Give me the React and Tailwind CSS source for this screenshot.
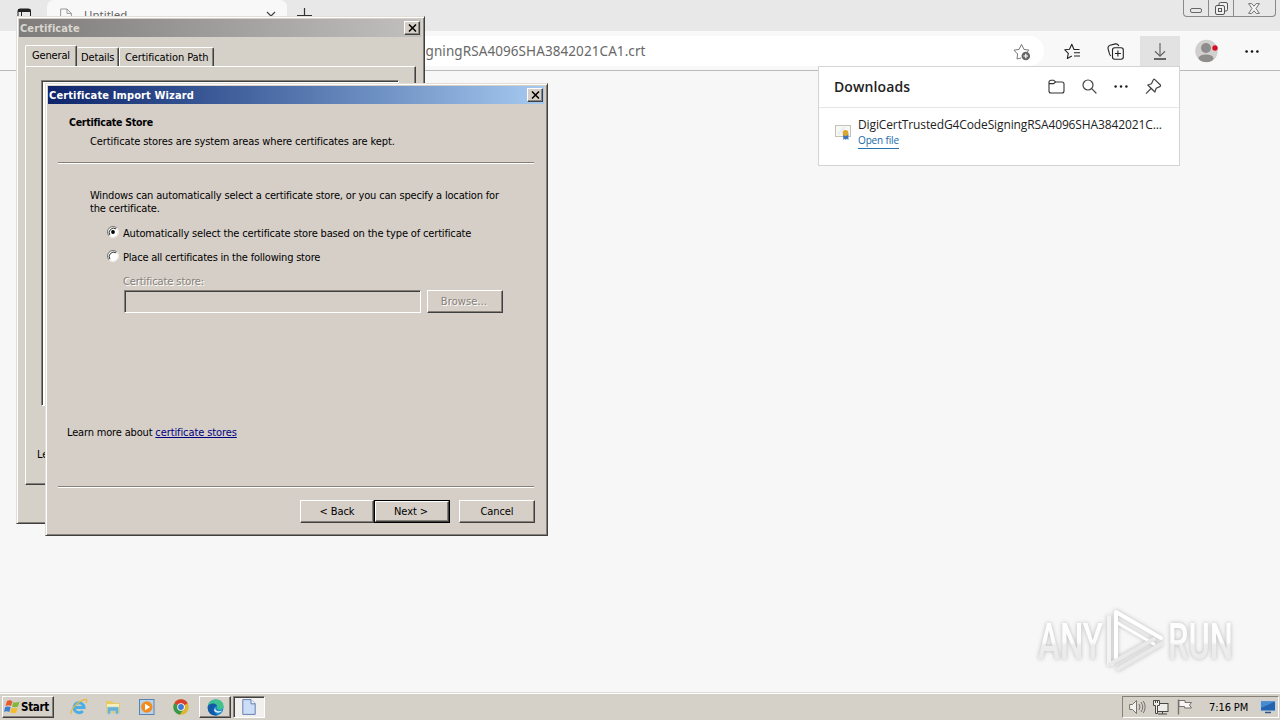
import React from "react";

const UI = "font-['DejaVu_Sans_Condensed','DejaVu_Sans',sans-serif]";

function CloseBox() {
  return (
    <button className="flex h-[14px] w-[16px] items-center justify-center border border-t-white border-l-white border-r-[#404040] border-b-[#404040] bg-[#d5cfc7] shadow-[inset_-1px_-1px_0_#8a8680]">
      <svg width="9" height="8" viewBox="0 0 9 8" className="block">
        <path d="M1 0.5 L8 7.5 M8 0.5 L1 7.5" stroke="#000" strokeWidth="1.5" fill="none" />
      </svg>
    </button>
  );
}

function Button({ children, className = "", disabled = false }) {
  return (
    <button
      className={
        "flex h-[23px] items-center justify-center border border-t-white border-l-white border-r-[#404040] border-b-[#404040] bg-[#d5cfc8] text-[11px] leading-[13px] tracking-[-0.1px] shadow-[inset_-1px_-1px_0_#858078] " +
        (disabled ? "text-[#858078] [text-shadow:1px_1px_0_#fff] " : "text-black ") +
        className
      }
    >
      {children}
    </button>
  );
}

function Rule() {
  return <div className="h-[2px] w-[476px] border-t border-b border-t-[#858078] border-b-white" />;
}

function Radio({ checked }) {
  return (
    <svg width="12" height="12" viewBox="0 0 12 12" className="block shrink-0">
      <circle cx="6" cy="6" r="5" fill="#fff" />
      <path d="M2.1 9.9 A5.5 5.5 0 0 1 9.9 2.1" fill="none" stroke="#777" strokeWidth="1" />
      <path d="M2.9 9 A4.4 4.4 0 0 1 9 2.9" fill="none" stroke="#333" strokeWidth="1" />
      <path d="M2.1 9.9 A5.5 5.5 0 0 0 9.9 2.1" fill="none" stroke="#f4f2ee" strokeWidth="1" />
      {checked && <circle cx="6" cy="6" r="1.9" fill="#000" />}
    </svg>
  );
}

function FolderIcon() {
  return (
    <svg width="17" height="15" viewBox="0 0 17 15" fill="none" stroke="#333" strokeWidth="1.1">
      <path d="M1 3.2 A2 2 0 0 1 3 1.2 H5.6 L7.6 3 H14 A2 2 0 0 1 16 5 V12 A2 2 0 0 1 14 14 H3 A2 2 0 0 1 1 12 Z M1 4.6 H5.6 L7.6 3" />
    </svg>
  );
}

function SearchIcon() {
  return (
    <svg width="15" height="15" viewBox="0 0 15 15" fill="none" stroke="#444" strokeWidth="1.2" strokeLinecap="round">
      <circle cx="6" cy="6" r="5" />
      <path d="M9.7 9.7 L14 14" />
    </svg>
  );
}

function Dots() {
  return (
    <svg width="14" height="3" viewBox="0 0 14 3" fill="#222">
      <circle cx="1.6" cy="1.5" r="1.25" />
      <circle cx="7" cy="1.5" r="1.25" />
      <circle cx="12.4" cy="1.5" r="1.25" />
    </svg>
  );
}

function PinIcon() {
  return (
    <svg width="17" height="17" viewBox="0 0 17 17" fill="none" stroke="#444" strokeWidth="1.2" strokeLinejoin="round">
      <path d="M9.6 1.4 L15.4 7 C15.8 7.6 15.5 8.3 14.8 8.6 L11.2 10.3 L9.9 14 L2.8 7 L6.5 5.8 L8.2 2 C8.5 1.2 9 1 9.6 1.4 Z M6 10.5 L1 15.6" />
    </svg>
  );
}

function TabStrip() {
  return (
    <div className="flex h-[31px] bg-[#e8e8e8]">
      <div className="w-[47px] pt-[8px] pl-[17px]">
        <svg width="15" height="14" viewBox="0 0 15 14" fill="none" stroke="#222">
          <rect x="1" y="1" width="12.5" height="12" rx="2" />
          <path d="M1 2.5 H13.5" strokeWidth="3" />
          <path d="M4.5 3 V13" />
        </svg>
      </div>
      <div className="flex h-[31px] w-[240px] items-start rounded-t-[7px] bg-[#f8f8f8] pt-[8px] pl-[13px]">
        <svg width="12" height="15" viewBox="0 0 12 15" fill="none" stroke="#999">
          <path d="M.6 1 H7 L11.4 5.4 V14 H.6 Z M7 1 V5.4 H11.4" />
        </svg>
        <span className="-mt-px ml-[12px] font-['Noto_Sans',sans-serif] text-[11.5px] leading-[15px] text-[#666]">Untitled</span>
        <svg width="10" height="10" viewBox="0 0 10 10" className="mt-[3px] mr-[11px] ml-auto shrink-0" stroke="#444" strokeWidth="1.2">
          <path d="M1 1 L9 9 M9 1 L1 9" />
        </svg>
      </div>
      <svg width="15" height="15" viewBox="0 0 15 15" className="mt-[8px] ml-[10px]" stroke="#333" strokeWidth="1.2">
        <path d="M7.5 0 V15 M0 7.5 H15" />
      </svg>
      <div className="ml-auto flex h-[17px] w-[93px] rounded-b-[4px] border border-t-0 border-[#8a8a8a]">
        <div className="flex w-[25px] items-end justify-center border-r border-[#8a8a8a] pb-[3px]">
          <svg width="12" height="5" viewBox="0 0 12 5" fill="none" stroke="#666">
            <rect x=".5" y=".5" width="11" height="4" rx="1.5" />
          </svg>
        </div>
        <div className="flex w-[25px] items-center justify-center border-r border-[#8a8a8a]">
          <svg width="13" height="13" viewBox="0 0 13 13" fill="#eee" stroke="#555">
            <rect x="4" y=".5" width="8.5" height="8.5" rx="1.5" />
            <rect x=".5" y="3.5" width="9" height="9" rx="1.5" />
            <rect x="3.5" y="6.5" width="3" height="3" />
          </svg>
        </div>
        <div className="flex flex-1 items-center justify-center pr-px">
          <svg width="12" height="11" viewBox="0 0 12 11" fill="#f4f4f4" stroke="#666" strokeWidth=".9">
            <path d="M.6 .6 H3.8 L6 3.2 L8.2 .6 H11.4 L8 5.5 L11.4 10.4 H8.2 L6 7.8 L3.8 10.4 H.6 L4 5.5 Z" />
          </svg>
        </div>
      </div>
      <div className="w-[4px]" />
    </div>
  );
}

function Toolbar() {
  return (
    <div className="flex h-[40px] items-start border-b border-[#b9b9b9] bg-[#f8f8f8] pt-[5px]">
      <div className="ml-[120px] flex h-[30px] w-[924px] items-center rounded-full bg-white pr-[13px]">
        <span className="ml-[302px] font-['Noto_Sans',sans-serif] text-[13.5px] leading-[18px] tracking-[0.08px] whitespace-nowrap text-[#686868]">
          igningRSA4096SHA3842021CA1.crt
        </span>
        <svg width="18" height="18" viewBox="0 0 18 18" className="mt-[2px] ml-auto" fill="none" stroke="#777" strokeLinejoin="round">
          <path d="M8 15 L4 16 L4.6 11 L1 7.2 L6 6.4 L8.5 1.4 L11 6.4 L16 7.2 L13.8 9.4" />
          <circle cx="12.8" cy="13" r="4.3" fill="#666" stroke="none" />
          <path d="M12.8 10.7 V15.3 M10.5 13 H15.1" stroke="#fff" strokeWidth="1.2" />
        </svg>
      </div>
      <svg width="17" height="17" viewBox="0 0 17 17" className="mt-[7px] ml-[20px]" fill="none" stroke="#222" strokeWidth="1.1" strokeLinejoin="round">
        <path d="M15.5 6.5 H10 L7.8 1.2 L5.5 6.2 L.8 6.8 L4.3 10.3 L3.3 15.5 L7.8 13" />
        <path d="M10 9.7 H16 M10 13 H16" />
      </svg>
      <svg width="17" height="17" viewBox="0 0 17 17" className="mt-[7px] ml-[26px]" fill="none" stroke="#222" strokeWidth="1.1">
        <path d="M4 13 C2 12 2.5 10 1.2 6.2 C.6 4 1 3 3 2.3 L8.5 .9 C10.5 .5 11.3 1.5 11.8 3.2" />
        <rect x="5.5" y="4.8" width="10.8" height="11.4" rx="2.2" />
        <path d="M10.9 7.5 V13.5 M7.9 10.5 H13.9" />
      </svg>
      <div className="ml-[16px] flex h-[30px] w-[40px] items-center justify-center bg-[#e2e2e2]">
        <svg width="14" height="17" viewBox="0 0 14 17" fill="none" stroke="#333" strokeWidth="1.2">
          <path d="M7 0 V13 M2 8.3 L7 13.2 L12 8.3" stroke="#666" />
          <path d="M1 16 H13" stroke="#111" />
        </svg>
      </div>
      <svg width="24" height="24" viewBox="0 0 24 24" className="mt-[3px] ml-[15px]">
        <defs>
          <clipPath id="avatar">
            <circle cx="11.5" cy="12" r="11.3" />
          </clipPath>
        </defs>
        <circle cx="11.5" cy="12" r="11.3" fill="#d2d0ce" />
        <g clipPath="url(#avatar)" fill="#8f8d8b">
          <circle cx="11" cy="9" r="5" />
          <ellipse cx="11" cy="19.4" rx="7.5" ry="4" />
        </g>
        <circle cx="20" cy="9" r="2.7" fill="#d80f24" />
      </svg>
      <svg width="14" height="3" viewBox="0 0 14 3" fill="#111" className="mt-[14px] ml-[26px]">
        <circle cx="1.6" cy="1.5" r="1.3" />
        <circle cx="7" cy="1.5" r="1.3" />
        <circle cx="12.4" cy="1.5" r="1.3" />
      </svg>
    </div>
  );
}

function Downloads() {
  return (
    <div className="absolute top-[66px] left-[818px] h-[100px] w-[362px] border border-[#d4d4d4] bg-white">
      <div className="flex h-[41px] items-center border-b border-[#e6e6e6] pr-[17px] pl-[15px]">
        <span className="font-['Open_Sans',sans-serif] text-[14px] leading-[18px] font-semibold tracking-[0.1px] text-[#222]">Downloads</span>
        <div className="ml-auto flex items-center">
          <div className="mb-[2px]"><FolderIcon /></div>
          <div className="mb-[2px] ml-[17px]"><SearchIcon /></div>
          <div className="mb-[2px] ml-[17px]"><Dots /></div>
          <div className="mb-[2px] ml-[17px]"><PinIcon /></div>
        </div>
      </div>
      <div className="flex pt-[9px] pl-[16px]">
        <svg width="17" height="17" viewBox="0 0 17 17" className="mt-[7px]">
          <rect x=".5" y="1.5" width="15" height="11" fill="#f7f8f2" stroke="#c4c2ba" />
          <path d="M2 10 L8 3 L11 3 L4 11 Z" fill="#e4edfb" />
          <path d="M8 10 H11 V16 L9.7 14.8 L8.4 16 Z" fill="#3f73b8" />
          <path d="M11 10 H13.4 V16 L12 14.8 L11 15.6 Z" fill="#3f73b8" />
          <circle cx="10.5" cy="9" r="2.9" fill="#dba52e" />
        </svg>
        <div className="ml-[6px] flex flex-col items-start font-['Open_Sans',sans-serif]">
          <span className="text-[12px] leading-[16px] tracking-[-0.12px] whitespace-nowrap text-[#222]">
            DigiCertTrustedG4CodeSigningRSA4096SHA3842021C...
          </span>
          <span className="border-b border-[#2a72ad] text-[10px] leading-[15px] tracking-[-0.15px] whitespace-nowrap text-[#1768aa]">Open file</span>
        </div>
      </div>
    </div>
  );
}

function CertificateWindow() {
  return (
    <div className="absolute top-[16px] left-[16px] h-[508px] w-[409px] border border-t-[#e2ded8] border-l-[#e2ded8] border-r-[#404040] border-b-[#404040] bg-[#d5d1c9] shadow-[inset_1px_1px_0_#fff,inset_-1px_-1px_0_#858078]">
      <div className="mt-[2px] ml-[2px] flex h-[18px] w-[402px] items-center justify-between bg-gradient-to-r from-[#7f7d7b] to-[#c1c0be] pr-[1px] pl-[1px]">
        <span className="text-[11px] leading-[13px] font-bold tracking-[0.1px] text-[#d9d6d0]">Certificate</span>
        <CloseBox />
      </div>
      <div className="flex h-[29px] items-end pl-[8px] text-[11px] leading-[13px]">
        <div className="z-10 h-[21px] w-[52px] rounded-t-[2px] border border-b-0 border-t-white border-r-[#404040] border-l-white bg-[#d5d1c9] pt-[3px] pl-[6px] tracking-[-0.15px] whitespace-nowrap shadow-[inset_-1px_0_0_#858078]">General</div>
        <div className="h-[19px] w-[42px] rounded-t-[2px] border-t border-r border-t-white border-r-[#404040] pt-[3px] pl-[4px] tracking-[-0.15px] whitespace-nowrap shadow-[inset_-1px_0_0_#858078]">Details</div>
        <div className="h-[19px] w-[95px] rounded-t-[2px] border border-b-0 border-t-white border-r-[#404040] border-l-white pt-[3px] pl-[5px] tracking-[-0.1px] whitespace-nowrap shadow-[inset_-1px_0_0_#858078]">Certification Path</div>
      </div>
      <div className="ml-[8px] h-[419px] w-[391px] border border-t-white border-r-[#404040] border-b-[#404040] border-l-white shadow-[inset_-1px_-1px_0_#858078]">
        <div className="mt-[13px] ml-[15px] h-[326px] w-[358px] border border-t-[#858078] border-r-white border-b-white border-l-[#858078] bg-white shadow-[inset_1px_1px_0_#404040]" />
        <div className="mt-[42px] ml-[11px] text-[11px] leading-[13px]">Learn more about</div>
      </div>
    </div>
  );
}

function Wizard() {
  return (
    <div className="absolute top-[83px] left-[45px] h-[453px] w-[503px] border border-t-[#e2ded8] border-l-[#e2ded8] border-r-[#404040] border-b-[#404040] bg-[#d6cfc8] text-[11px] leading-[13px] text-black shadow-[inset_1px_1px_0_#fff,inset_-1px_-1px_0_#858078]">
      <div className="mt-[2px] ml-[2px] flex h-[18px] w-[496px] items-center justify-between bg-gradient-to-r from-[#0f246b] to-[#a6caf0] pr-[1px] pl-[1px]">
        <span className="font-bold tracking-[0.13px] whitespace-nowrap text-white">Certificate Import Wizard</span>
        <CloseBox />
      </div>
      <div className="h-[58px] pt-[12px] pl-[23px]">
        <div className="text-[10.5px] font-bold tracking-[-0.25px] whitespace-nowrap">Certificate Store</div>
        <div className="mt-[6px] pl-[21px] tracking-[-0.11px] whitespace-nowrap">Certificate stores are system areas where certificates are kept.</div>
      </div>
      <div className="pl-[12px]"><Rule /></div>
      <div className="h-[322px] pl-[21px]">
        <div className="pt-[25px] pl-[23px]">
          <div className="tracking-[-0.17px] whitespace-nowrap">Windows can automatically select a certificate store, or you can specify a location for</div>
          <div className="tracking-[-0.17px] whitespace-nowrap">the certificate.</div>
        </div>
        <div className="mt-[12px] flex items-start pl-[40px]">
          <div className="-mt-px"><Radio checked /></div>
          <span className="ml-[4px] tracking-[-0.16px] whitespace-nowrap">Automatically select the certificate store based on the type of certificate</span>
        </div>
        <div className="mt-[11px] flex items-start pl-[40px]">
          <div className="-mt-px"><Radio /></div>
          <span className="ml-[4px] tracking-[-0.21px] whitespace-nowrap">Place all certificates in the following store</span>
        </div>
        <div className="mt-[11px] pl-[56px] tracking-[-0.1px] text-[#858078] [text-shadow:1px_1px_0_#fff]">Certificate store:</div>
        <div className="mt-[2px] flex pl-[57px]">
          <div className="h-[23px] w-[297px] border border-t-[#858078] border-r-white border-b-white border-l-[#858078] shadow-[inset_1px_1px_0_#404040]" />
          <Button disabled className="ml-[6px] w-[76px] pr-[2px] tracking-[0.1px]!">Browse...</Button>
        </div>
        <div className="mt-[113px] tracking-[-0.17px] whitespace-nowrap">
          Learn more about <span className="tracking-[-0.1px] text-[#000080] underline">certificate stores</span>
        </div>
      </div>
      <div className="pl-[12px]"><Rule /></div>
      <div className="mt-[12px] flex pl-[254px]">
        <Button className="w-[74px]">&lt; Back</Button>
        <div className="flex h-[23px] w-[76px] border border-black">
          <Button className="h-[21px]! w-[74px] pr-[2px]">Next &gt;</Button>
        </div>
        <Button className="ml-[9px] w-[76px]">Cancel</Button>
      </div>
    </div>
  );
}

function Watermark() {
  return (
    <svg width="216" height="76" viewBox="0 0 216 76" className="absolute top-[604px] left-[1034px] overflow-visible drop-shadow-[0_0_2px_rgba(0,0,0,0.25)]">
      <defs>
        <linearGradient id="wm" x1="0" y1="0" x2="0" y2="1">
          <stop offset="0" stopColor="#fff" />
          <stop offset="0.5" stopColor="#fcfcfc" />
          <stop offset="0.55" stopColor="#ededed" />
          <stop offset="1" stopColor="#e8e8e8" />
        </linearGradient>
      </defs>
      <g fill="url(#wm)" fontFamily="Roboto, sans-serif" fontSize="50" fontWeight="500">
        <text x="4" y="55" textLength="65" lengthAdjust="spacingAndGlyphs">ANY</text>
        <text x="134" y="55" textLength="65" lengthAdjust="spacingAndGlyphs">RUN</text>
      </g>
      <g fill="none" strokeWidth="4" strokeLinecap="round" strokeLinejoin="round">
        <path d="M75 13 V60 H78" stroke="#f3f3f3" />
        <path d="M82 54 V8 L127 34" stroke="#fff" />
        <path d="M82 18 L120 40" stroke="#fff" strokeWidth="3" />
        <path d="M76 60 L120 35 M84 65 L127 40" stroke="#e9e9e9" />
      </g>
    </svg>
  );
}

function Taskbar() {
  return (
    <div className="flex h-[28px] items-start border-t border-[#dedbd5] bg-[#d5d0c8] pt-[3px] shadow-[inset_0_1px_0_#fff]">
      <button className="ml-[2px] flex h-[22px] w-[52px] items-center border border-t-white border-l-white border-r-[#404040] border-b-[#404040] pl-px shadow-[inset_-1px_-1px_0_#858078]">
        <svg width="17" height="16" viewBox="0 0 17 16" className="shrink-0">
          <path d="M3 2 Q6 .5 8.5 2.5 L7 7 Q4.5 5.5 1.5 7 Z" fill="#e65a2d" />
          <path d="M9.5 3 Q12 4.3 15.5 2.5 L14 7.5 Q11 9 8 7.4 Z" fill="#7fb83b" />
          <path d="M1.2 8 Q4 6.7 6.7 8.2 L5.3 13 Q2.8 11.5 0 12.8 Z" fill="#3f7fd0" />
          <path d="M7.7 8.7 Q11 10 13.7 8.7 L12.3 13.4 Q9.5 15 6.3 13.4 Z" fill="#f3bd2a" />
        </svg>
        <span className="text-[11.5px] leading-[14px] font-bold tracking-[-0.3px] text-black">Start</span>
      </button>
      <div className="ml-[16px] flex h-[22px] items-center">
        <svg width="18" height="18" viewBox="0 0 18 18" fill="none">
          <path d="M4 9.5 H14 A5 5 0 1 0 12.8 13" stroke="#4baee5" strokeWidth="3" />
          <path d="M1.2 16 C-.5 12 9 2.5 15 1.5 C17.3 1.2 17 3.2 16 5" stroke="#e6ba42" strokeWidth="1.3" />
        </svg>
        <svg width="18" height="18" viewBox="0 0 18 18" className="ml-[16px]">
          <path d="M2 3 H8 L9.5 5 H16 V15 H2 Z" fill="#e7ca68" />
          <path d="M3 6 H15 V9 H3 Z" fill="#f9efbb" />
          <path d="M3.5 9 H14.5 V16 H11.5 V13 H6.5 V16 H3.5 Z" fill="#66afd5" stroke="#a4d4ea" strokeWidth=".7" />
        </svg>
        <svg width="18" height="18" viewBox="0 0 18 18" className="ml-[16px]">
          <rect x="1.5" y="1.5" width="14.5" height="15" fill="#b9d2ea" stroke="#5684b6" />
          <circle cx="8.8" cy="9" r="5.7" fill="#f28b1d" />
          <path d="M7 5.7 L12.2 9 L7 12.3 Z" fill="#fff" />
        </svg>
        <svg width="18" height="18" viewBox="0 0 18 18" className="ml-[16px]">
          <circle cx="9" cy="9" r="7.7" fill="#ddb62f" />
          <path d="M9 9 L2.3 5.2 A7.7 7.7 0 0 1 15.7 5.2 Z" fill="#d7402f" />
          <path d="M9 9 L2.3 5.2 A7.7 7.7 0 0 0 8 16.6 L11.5 11 Z" fill="#36994a" />
          <circle cx="9" cy="9" r="3.8" fill="#fff" />
          <circle cx="9" cy="9" r="2.9" fill="#4078d4" />
        </svg>
      </div>
      <div className="ml-[9px] flex h-[22px] w-[32px] items-center justify-center border border-t-white border-l-white border-r-[#404040] border-b-[#404040] shadow-[inset_-1px_-1px_0_#858078]">
        <svg width="17" height="17" viewBox="0 0 17 17">
          <circle cx="8.5" cy="8.5" r="8" fill="#168bd0" />
          <path d="M1 7 C2 -1 16 -2 16.5 7 C17 11 11 12 10 9.5 C11.5 5 5 2 1 7 Z" fill="#3fc28d" />
          <path d="M1 7 C5 3 9 4.5 10 7 C6 7 5 13 10.5 16.2 C4 17.5 0 13 1 7 Z" fill="#1458a6" />
          <path d="M8.3 9 C8 12.4 12 13 15 11.5 C13 15 8 14 7 11 Z" fill="#e4edf2" />
        </svg>
      </div>
      <div className="ml-[2px] flex h-[22px] w-[32px] items-center justify-center border border-t-[#858078] border-r-white border-b-white border-l-[#858078] bg-[#f2f0ee] shadow-[inset_1px_1px_0_#404040]">
        <svg width="14" height="16" viewBox="0 0 14 16">
          <path d="M.8 .6 H9 L13.2 4.8 V15.4 H.8 Z" fill="#cbddf7" stroke="#6580ae" />
          <path d="M9 .6 V4.8 H13.2" fill="#f5f9ff" stroke="#6580ae" />
        </svg>
      </div>
      <div className="mr-[1px] ml-auto flex h-[22px] w-[157px] items-center border border-t-[#858078] border-r-white border-b-white border-l-[#858078] pl-[6px]">
        <svg width="17" height="16" viewBox="0 0 17 16" fill="#f4f2ef" stroke="#77736d">
          <path d="M.6 5.5 H3.5 L7.5 1.5 V14.5 L3.5 10.5 H.6 Z" />
          <path d="M10 5 Q12 8 10 11 M12 3 Q15.5 8 12 13 M14.3 2 Q18 8 14.3 14" fill="none" />
        </svg>
        <svg width="18" height="16" viewBox="0 0 18 16" className="ml-[6px]" fill="#eeece8" stroke="#4b4844">
          <rect x="4.5" y="4.5" width="11.5" height="8" />
          <path d="M6 15 H15 M10.5 12.5 V15" />
          <path d="M1.5 1.5 H7.5 V6.5 H5.5 V14.5 H3.5 V6.5 H1.5 Z M3.5 1.5 V4 M5.5 1.5 V4" />
        </svg>
        <svg width="17" height="16" viewBox="0 0 17 16" className="ml-[6px]" fill="#f7f6f4" stroke="#77736d">
          <path d="M2.5 .5 V15.5" strokeWidth="1.4" />
          <path d="M3 1.5 H9 V3.5 H15.5 L13.5 6 L15.5 9 H8.5 V7.5 H3 Z" />
        </svg>
        <span className="ml-[16px] w-[41px] text-[11px] leading-[13px] tracking-[-0.1px] whitespace-nowrap text-black">7:16 PM</span>
        <svg width="16" height="14" viewBox="0 0 16 14" className="ml-[10px] shrink-0">
          <rect x=".5" y="1" width="15" height="10" fill="#2463ad" stroke="#bfd0e3" />
          <path d="M1 1.5 H15 L1 8 Z" fill="#478bcf" />
          <path d="M5 12.5 H11" stroke="#315884" strokeWidth="1.5" />
        </svg>
      </div>
    </div>
  );
}

export default function App() {
  return (
    <div className={"relative flex h-[720px] w-[1280px] flex-col overflow-hidden bg-[#f7f7f7] " + UI}>
      <TabStrip />
      <Toolbar />
      <div className="flex-1" />
      <Taskbar />
      <Downloads />
      <Watermark />
      <CertificateWindow />
      <Wizard />
    </div>
  );
}
